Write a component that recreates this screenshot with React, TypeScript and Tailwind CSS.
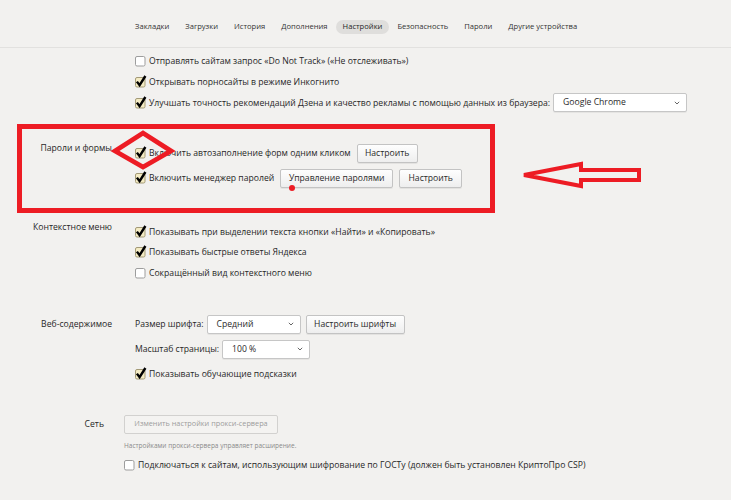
import React from "react";

const TXT = "text-[8.65px] leading-[10px] text-[#272727] whitespace-nowrap";

function Check({ on = false }: { on?: boolean }) {
  return (
    <svg width="11" height="12" viewBox="0 0 11 12" className="shrink-0 overflow-visible">
      <rect
        x="0.5"
        y="1.5"
        width="9.5"
        height="9.5"
        rx="1.5"
        fill={on ? "#f4ebc3" : "#ffffff"}
        stroke={on ? "#a39a77" : "#9d9d9d"}
      />
      {on && (
        <path
          d="M1.9 5.6 L4.6 9.2 L10.4 0"
          stroke="#000"
          strokeWidth="2.4"
          fill="none"
          strokeLinejoin="miter"
        />
      )}
    </svg>
  );
}

function CheckRow({
  on,
  children,
  className = "h-[20px]",
}: {
  on?: boolean;
  children: React.ReactNode;
  className?: string;
}) {
  return (
    <div className={`flex items-center gap-[3px] ${className}`}>
      <Check on={on} />
      <span className={TXT}>{children}</span>
    </div>
  );
}

function Btn({
  children,
  className,
  disabled = false,
}: {
  children: React.ReactNode;
  className: string;
  disabled?: boolean;
}) {
  return (
    <div
      className={`flex h-[19px] shrink-0 items-center justify-center rounded-[2px] border leading-none whitespace-nowrap ${
        disabled
          ? "border-[#d2d1cf] bg-[#f4f3f1] text-[7.3px] text-[#9c9c9c]"
          : "border-[#c3c3c3] bg-gradient-to-b from-[#fefefe] to-[#eeeeee] text-[8.65px] text-[#2a2a2a] shadow-[0_1px_0_rgba(0,0,0,0.06)]"
      } ${className}`}
    >
      {children}
    </div>
  );
}

function Select({ value, className }: { value: string; className: string }) {
  return (
    <div
      className={`flex h-[19px] shrink-0 items-center justify-between rounded-[2px] border border-[#c6c6c6] bg-white pl-[9px] pr-[6px] text-[8.65px] leading-none text-[#2a2a2a] shadow-[0_1px_0_rgba(0,0,0,0.05)] ${className}`}
    >
      <span>{value}</span>
      <svg width="6" height="4" viewBox="0 0 6 4">
        <path d="M0.8 0.8 L3 3 L5.2 0.8" stroke="#666" strokeWidth="1" fill="none" />
      </svg>
    </div>
  );
}

const tabs = [
  "Закладки",
  "Загрузки",
  "История",
  "Дополнения",
  "Настройки",
  "Безопасность",
  "Пароли",
  "Другие устройства",
];

export default function App() {
  return (
    <div className="relative h-[500px] w-[731px] overflow-hidden bg-[#f2f1ef] font-['Open_Sans','Noto_Sans',sans-serif]">
      {/* top navigation */}
      <nav className="flex h-[48px] items-center border-b border-[#e2e1df] pl-[127px] pt-[6px]">
        {tabs.map((t) => (
          <div
            key={t}
            className={`flex h-[14px] items-center rounded-full text-[7.6px] leading-none whitespace-nowrap ${
              t === "Настройки" ? "bg-[#dfdedc] px-[7px] text-[#1e1e1e]" : "px-[8px] text-[#333333]"
            }`}
          >
            {t}
          </div>
        ))}
      </nav>

      <main className="flex flex-col">
        {/* privacy rows */}
        <section className="mt-[3px] flex flex-col pl-[135px]">
          <CheckRow className="h-[20px]">Отправлять сайтам запрос «Do Not Track» («Не отслеживать»)</CheckRow>
          <CheckRow on className="h-[21px]">
            Открывать порносайты в режиме Инкогнито
          </CheckRow>
          <div className="flex h-[21px] items-center gap-[3px]">
            <Check on />
            <span className={TXT}>
              Улучшать точность рекомендаций Дзена и качество рекламы с помощью данных из браузера:
            </span>
            <Select value="Google Chrome" className="w-[134px]" />
          </div>
        </section>

        {/* passwords and forms */}
        <section className="mt-[30px] flex">
          <div className={`w-[112px] text-right ${TXT}`}>Пароли и формы</div>
          <div className="ml-[23px] flex flex-col">
            <div className="flex h-[20px] items-center">
              <Check on />
              <span className={`ml-[3px] ${TXT}`}>Включить автозаполнение форм одним кликом</span>
              <Btn className="ml-[6px] w-[61px]">Настроить</Btn>
            </div>
            <div className="mt-[5px] flex h-[20px] items-center">
              <Check on />
              <span className={`ml-[3px] ${TXT}`}>Включить менеджер паролей</span>
              <Btn className="ml-[6px] w-[113px]">Управление паролями</Btn>
              <Btn className="ml-[6px] w-[63px]">Настроить</Btn>
            </div>
          </div>
        </section>

        {/* context menu */}
        <section className="mt-[34px] flex">
          <div className={`w-[112px] text-right ${TXT}`}>Контекстное меню</div>
          <div className="ml-[23px] flex flex-col">
            <CheckRow on className="h-[20px]">
              Показывать при выделении текста кнопки «Найти» и «Копировать»
            </CheckRow>
            <CheckRow on className="h-[20px]">
              Показывать быстрые ответы Яндекса
            </CheckRow>
            <CheckRow className="h-[21px]">Сокращённый вид контекстного меню</CheckRow>
          </div>
        </section>

        {/* web content */}
        <section className="mt-[31px] flex">
          <div className={`w-[112px] pt-[5px] text-right ${TXT}`}>Веб-содержимое</div>
          <div className="ml-[23px] flex flex-col">
            <div className="flex h-[20px] items-center">
              <span className={TXT}>Размер шрифта:</span>
              <Select value="Средний" className="ml-[3px] w-[94px]" />
              <Btn className="ml-[5px] w-[99px]">Настроить шрифты</Btn>
            </div>
            <div className="mt-[5px] flex h-[20px] items-center">
              <span className={TXT}>Масштаб страницы:</span>
              <Select value="100 %" className="ml-[3px] w-[88px]" />
            </div>
            <CheckRow on className="mt-[5px] h-[20px]">
              Показывать обучающие подсказки
            </CheckRow>
          </div>
        </section>

        {/* network */}
        <section className="mt-[30px] flex">
          <div className={`w-[104px] pt-[5px] text-right ${TXT}`}>Сеть</div>
          <div className="ml-[20px] flex flex-col">
            <div className="flex h-[20px] items-center">
              <Btn disabled className="w-[154px]">
                Изменить настройки прокси-сервера
              </Btn>
            </div>
            <div className="mt-[7px] text-[6.5px] leading-[10px] whitespace-nowrap text-[#8a8a8a]">
              Настройками прокси-сервера управляет расширение.
            </div>
            <CheckRow className="mt-[4px] h-[20px]">
              Подключаться к сайтам, использующим шифрование по ГОСТу (должен быть установлен КриптоПро CSP)
            </CheckRow>
          </div>
        </section>
      </main>

      {/* red markup drawn over the page */}
      <svg
        width="731"
        height="500"
        viewBox="0 0 731 500"
        className="pointer-events-none absolute left-0 top-0"
      >
        <rect x="19.5" y="126.5" width="473" height="84" fill="none" stroke="#ed1c24" strokeWidth="5" />
        <polygon
          points="115,151 143,133 171,151 143,167"
          fill="none"
          stroke="#ed1c24"
          strokeWidth="4.8"
        />
        <circle cx="292" cy="188" r="3" fill="#ed1c24" />
        <polygon
          points="524,175 581,164 581,170 639,170 639,180 581,180 581,186"
          fill="none"
          stroke="#ed1c24"
          strokeWidth="4"
        />
      </svg>
    </div>
  );
}
